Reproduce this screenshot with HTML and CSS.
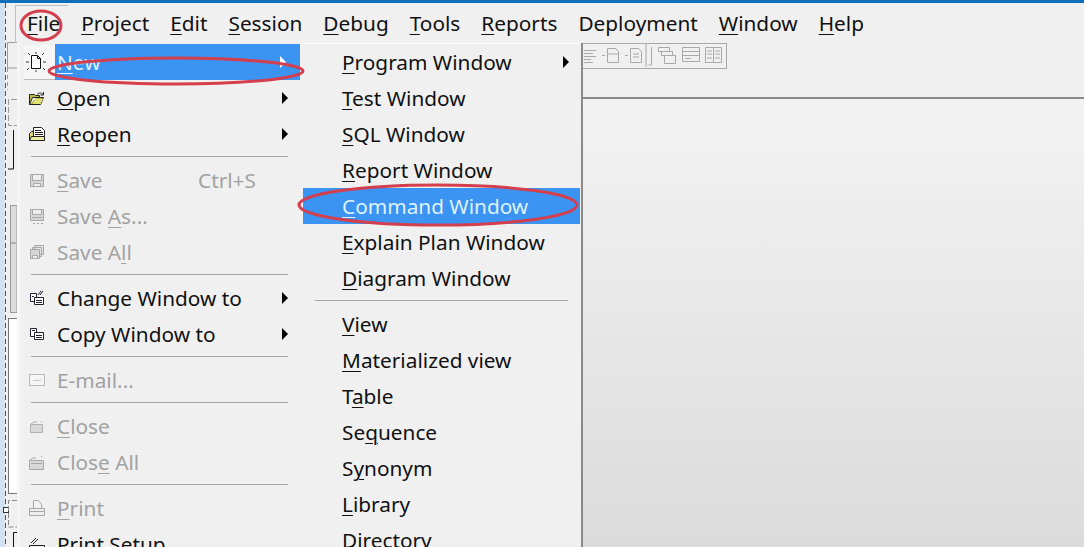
FILE: index.html
```html
<!DOCTYPE html>
<html lang="en">
<head>
<meta charset="utf-8">
<title>File menu</title>
<link rel="stylesheet" href="styles.css">
</head>
<body>
<div class="app">
  <div class="titlebar"></div>
  <div class="body">
    <svg class="strip" width="17" height="544" viewBox="0 3 17 544">
      <rect x="0" y="3" width="5" height="544" fill="#d3e2f0"/>
      <path d="M5.500 3v544" stroke="#556" stroke-dasharray="5 3" fill="none"/>
      <g fill="none" stroke="#9a9a9a">
        <path d="M17 42.500H7.500v25.500H17"/>
        <path d="M7.500 68v22" stroke-dasharray="4 3"/>
        <path d="M17 99.500H8.500V125.500H17" stroke-dasharray="6 2"/>
      </g>
      <path d="M13.500 130v39H8" stroke="#111" fill="none"/>
      <rect x="10.500" y="205.500" width="6.500" height="107" fill="#dcdcdc" stroke="#999"/>
      <path d="M11 243h5" stroke="#888"/>
      <rect x="8.500" y="318.500" width="9" height="175" fill="#fff" stroke="#777"/>
      <rect x="3.500" y="507.500" width="5" height="5" fill="#fff" stroke="#333"/>
      <path d="M17 500.500H8.500v26.500H17" fill="none" stroke="#888" stroke-dasharray="5 2"/>
      <path d="M17 532.500h-3.500V547" fill="none" stroke="#111"/>
    </svg>
    <div class="main">
      <nav class="menubar">
        <span class="frame"></span>
        <span class="top"><u>F</u>ile</span>
        <span class="top"><u>P</u>roject</span>
        <span class="top"><u>E</u>dit</span>
        <span class="top"><u>S</u>ession</span>
        <span class="top"><u>D</u>ebug</span>
        <span class="top"><u>T</u>ools</span>
        <span class="top"><u>R</u>eports</span>
        <span class="top">Deployment</span>
        <span class="top"><u>W</u>indow</span>
        <span class="top"><u>H</u>elp</span>
      </nav>
      <div class="right">
        <div class="toolbar">
          <svg width="144" height="26" viewBox="0 0 144 26">
            <g fill="none" stroke="#a8a8a8">
              <path d="M1 7.500h12M1 10.500h9M1 13.500h12M1 16.500h7M1 19.500h9"/>
              <path d="M24.500 5.500h8l3 3v11h-11zM24 11h11M19 12.500h3"/>
              <path d="M47.500 5.500h8l3 3v11h-11zM50 11h6M50 14h6M42 12.500h3"/>
              <path d="M63 0v24M68.500 4v18h-3"/>
              <path d="M75.500 4.500h11v4h-11zM78.500 8.500h11v4h-11zM81.500 12.500h11v8h-11z"/>
              <path d="M99.500 4.500h17v14h-17zM99 8.500h18M99 12.500h18M102 15.500h6"/>
              <path d="M122.500 4.500h16v15h-16zM130.500 4v16M124 8h5M124 11h5M132 8h5M132 11h5M124 15h5M132 15h5"/>
            </g>
          </svg>
        </div>
        <div class="gradient"></div>
      </div>
    </div>
  </div>

  <div class="menu file-menu">
    <div class="item active"><span class="ico"><svg width="20" height="20" viewBox="0 0 20 20"><path d="M5.500 3.500h6l3 3v10h-9z" fill="#fff" stroke="#111"/><path d="M11.500 3.500v3h3" fill="none" stroke="#111"/><path d="M10 0v2M2 1l2 2M18 1l-2 2M0 10h3M17 10h3M1 18l2-2M19 18l-2-2M10 18v2" stroke="#333"/></svg></span><span class="lbl"><u>N</u>ew</span><i class="arrow"></i></div>
    <div class="item"><span class="ico"><svg width="18" height="15" viewBox="0 0 18 15"><path d="M1.500 13.500v-10h5l1 1h4v2h-7l-3 7h11l3-7h-7" fill="#b9bb4e" stroke="#222"/><path d="M5 13l2.500-5H15l-2.500 5z" fill="#e2e274"/><path d="M9 3.500c2-2 4-2 6 0M15.500 4v-3M15.500 4h-3" fill="none" stroke="#222"/></svg></span><span class="lbl"><u>O</u>pen</span><i class="arrow"></i></div>
    <div class="item"><span class="ico"><svg width="18" height="16" viewBox="0 0 18 16"><path d="M1.500 14.500v-7l2-2h2v9z" fill="#d8d878" stroke="#222"/><path d="M5.500 1.500h8l3 3v7h-11z" fill="#fff" stroke="#222"/><path d="M7 4.500h6M7 6.500h8M7 8.500h8" stroke="#222"/><path d="M1.500 14.500l2-4h13v4z" fill="#ecec9e" stroke="#222"/></svg></span><span class="lbl"><u>R</u>eopen</span><i class="arrow"></i></div>
    <div class="sep"></div>
    <div class="item off"><span class="ico"><svg width="16" height="15" viewBox="0 0 16 15"><path d="M1.500 1.500h13v12h-13z" fill="#d6d6d6" stroke="#a8a8a8"/><path d="M3.500 1.500h9v6h-9zM4.500 10.500h7v3h-7z" fill="#eee" stroke="#a8a8a8"/></svg></span><span class="lbl"><u>S</u>ave</span><span class="key">Ctrl+S</span></div>
    <div class="item off"><span class="ico"><svg width="16" height="17" viewBox="0 0 16 17"><path d="M1.500 1.500h13v11h-13z" fill="#d6d6d6" stroke="#a8a8a8"/><path d="M3.500 1.500h9v5h-9z" fill="#eee" stroke="#a8a8a8"/><path d="M3 9.500h10M4 15.500h2M8 15.500h2M12 15.500h2" stroke="#a8a8a8"/></svg></span><span class="lbl">Save <u>A</u>s...</span></div>
    <div class="item off"><span class="ico"><svg width="16" height="16" viewBox="0 0 16 16"><path d="M5.500 1.500h9v9h-9zM3.500 3.500h9v9h-9z" fill="#e4e4e4" stroke="#a8a8a8"/><path d="M1.500 5.500h9v9h-9z" fill="#d6d6d6" stroke="#a8a8a8"/><path d="M3.500 11.500h5v3h-5z" fill="#eee" stroke="#a8a8a8"/></svg></span><span class="lbl">Save A<u>l</u>l</span></div>
    <div class="sep"></div>
    <div class="item"><span class="ico"><svg width="16" height="16" viewBox="0 0 16 16"><path d="M1.500 3.500h6v8h-6z" fill="#fff" stroke="#223"/><path d="M5.500 7.500h9v7h-9z" fill="#fff" stroke="#223"/><path d="M7 10.500h6M7 12.500h6M3 6.500h2M9 5l3-4M11 5l3-4" stroke="#223"/></svg></span><span class="lbl">Change Window to</span><i class="arrow"></i></div>
    <div class="item"><span class="ico"><svg width="16" height="14" viewBox="0 0 16 14"><path d="M1.500 1.500h6v8h-6z" fill="#fff" stroke="#223"/><path d="M5.500 5.500h9v7h-9z" fill="#fff" stroke="#223"/><path d="M3 3.500h3M7 8.500h6M7 10.500h6" stroke="#223"/></svg></span><span class="lbl">Copy Window to</span><i class="arrow"></i></div>
    <div class="sep"></div>
    <div class="item off"><span class="ico"><svg width="16" height="12" viewBox="0 0 16 12"><path d="M.5.500h15v11H.5z" fill="#f4f4f4" stroke="#b8b8b8"/><path d="M4 6.500h8" stroke="#c8c8c8"/></svg></span><span class="lbl">E-mail...</span></div>
    <div class="sep"></div>
    <div class="item off"><span class="ico"><svg width="14" height="13" viewBox="0 0 14 13"><path d="M.5 4.500h12v8H.5z" fill="#d8d8d8" stroke="#b0b0b0"/><path d="M1 4l3-2h3M11 1l1 1" stroke="#a8a8a8" fill="none"/></svg></span><span class="lbl"><u>C</u>lose</span></div>
    <div class="item off"><span class="ico"><svg width="15" height="15" viewBox="0 0 15 15"><path d="M.5 5.500h14v9H.5z" fill="#d8d8d8" stroke="#a8a8a8"/><path d="M2 8.500h11M1 5l3-2h3M12 1l1 1" stroke="#a8a8a8" fill="none"/></svg></span><span class="lbl">Clos<u>e</u> All</span></div>
    <div class="sep"></div>
    <div class="item off"><span class="ico"><svg width="16" height="18" viewBox="0 0 16 18"><path d="M4.500 1.500h5l3 4v4h-8z" fill="#f2f2f2" stroke="#a8a8a8"/><path d="M.5 9.500h15v7H.5z" fill="#eee" stroke="#a8a8a8"/><path d="M1 12.500h14" stroke="#a8a8a8"/></svg></span><span class="lbl"><u>P</u>rint</span></div>
    <div class="item"><span class="ico"><svg width="18" height="17" viewBox="0 0 18 17"><path d="M1.500 9.500h15v7h-15z" fill="#eee" stroke="#222"/><path d="M3 7l5-5M5 8l5-5M5 9.500h8" stroke="#222" fill="none"/></svg></span><span class="lbl">Print Set<u>u</u>p</span></div>
  </div>

  <div class="menu new-menu">
    <div class="item"><span class="lbl"><u>P</u>rogram Window</span><i class="arrow"></i></div>
    <div class="item"><span class="lbl"><u>T</u>est Window</span></div>
    <div class="item"><span class="lbl"><u>S</u>QL Window</span></div>
    <div class="item"><span class="lbl"><u>R</u>eport Window</span></div>
    <div class="item active"><span class="lbl"><u>C</u>ommand Window</span></div>
    <div class="item"><span class="lbl"><u>E</u>xplain Plan Window</span></div>
    <div class="item"><span class="lbl"><u>D</u>iagram Window</span></div>
    <div class="sep"></div>
    <div class="item"><span class="lbl"><u>V</u>iew</span></div>
    <div class="item"><span class="lbl"><u>M</u>aterialized view</span></div>
    <div class="item"><span class="lbl">T<u>a</u>ble</span></div>
    <div class="item"><span class="lbl">Se<u>q</u>uence</span></div>
    <div class="item"><span class="lbl">S<u>y</u>nonym</span></div>
    <div class="item"><span class="lbl"><u>L</u>ibrary</span></div>
    <div class="item"><span class="lbl"><u>D</u>irectory</span></div>
  </div>

  <svg class="marks" width="1084" height="547" viewBox="0 0 1084 547">
    <ellipse cx="41" cy="25.500" rx="20" ry="14.500"/>
    <ellipse cx="176" cy="71" rx="127" ry="13"/>
    <ellipse cx="438" cy="205" rx="139" ry="20"/>
  </svg>
</div>
</body>
</html>
```

FILE: styles.css
```css
* { box-sizing: border-box; }
html, body { margin: 0; padding: 0; }
body { width: 1084px; height: 547px; overflow: hidden; font-family: "Noto Sans", "Open Sans", sans-serif; color: #111; }
.app { position: relative; width: 1084px; height: 547px; overflow: hidden; display: flex; flex-direction: column; background: #f0f0f0; }
.titlebar { height: 3px; background: #0f6fb8; flex: none; }
.body { flex: 1; display: flex; min-height: 0; }
.strip { flex: none; display: block; }
.main { flex: 1; display: flex; flex-direction: column; min-width: 0; }
.menubar { position: relative; height: 40px; flex: none; display: flex; align-items: center; padding-left: 10px; gap: 21px; font-size: 20.800px; }
.frame { position: absolute; left: -2px; top: 2px; width: 53px; height: 38px; border-left: 1px solid #bdbdbd; border-top: 1px solid #bdbdbd; }
.top { white-space: nowrap; line-height: 40px; }
u { text-underline-offset: 3px; text-decoration-thickness: 1px; }
.right { flex: 1; display: flex; flex-direction: column; margin-left: 564px; border-left: 2px solid #8a8a8a; min-height: 0; }
.toolbar { flex: none; height: 26px; width: 144px; border: solid #a8a8a8; border-width: 1px 1px 1px 0; }
.toolbar svg { display: block; margin-top: -1px; }
.gradient { flex: 1; margin-top: 28px; border-top: 2px solid #8a8a8a; background: linear-gradient(#f3f3f3, #dbdbdb); }
.menu { position: absolute; top: 43px; background: #f0f0f0; padding-top: 1px; font-size: 20.800px; }
.file-menu { left: 17px; width: 285px; height: 504px; padding-left: 1px; border-left: 3px solid #f6f6f6; }
.new-menu { left: 302px; width: 279px; height: 504px; padding-left: 1px; border-top: 1px solid #fafafa; padding-top: 0; }
.item { position: relative; height: 36px; display: flex; align-items: center; white-space: nowrap; }
.file-menu .item { margin-left: -3px; }
.file-menu .lbl { margin-left: 2px; }
.file-menu .active { margin-left: 34px; width: 245px; }
.new-menu .item { margin-right: 1px; }
.new-menu .lbl { margin-left: 39px; }
.ico { width: 37px; flex: none; display: flex; justify-content: center; }
.file-menu .active .ico { position: absolute; left: -31px; top: 1px; width: 31px; height: 35px; align-items: center; justify-content: flex-start; padding-left: 2px; background: #f6f6f6; border-bottom: 1px solid #bcbcbc; }
.active { background: #3b93f2; color: #dff2ff; }
.off { color: #a2a2a2; }
.key { position: absolute; left: 180px; }
.arrow { position: absolute; top: 12px; right: 14px; width: 0; height: 0; border-left: 6px solid #000; border-top: 6px solid transparent; border-bottom: 6px solid transparent; }
.active .arrow { border-left-color: #fff; }
.new-menu .arrow { right: 11px; }
.sep { height: 10px; position: relative; }
.sep::before { content: ""; position: absolute; top: 4px; height: 1px; background: #a6a6a6; }
.file-menu .sep::before { left: 10px; right: 14px; }
.new-menu .sep::before { left: 12px; right: 13px; }
.marks { position: absolute; left: 0; top: 0; pointer-events: none; }
.marks ellipse { fill: none; stroke: #d43f4e; stroke-width: 3; }
```
